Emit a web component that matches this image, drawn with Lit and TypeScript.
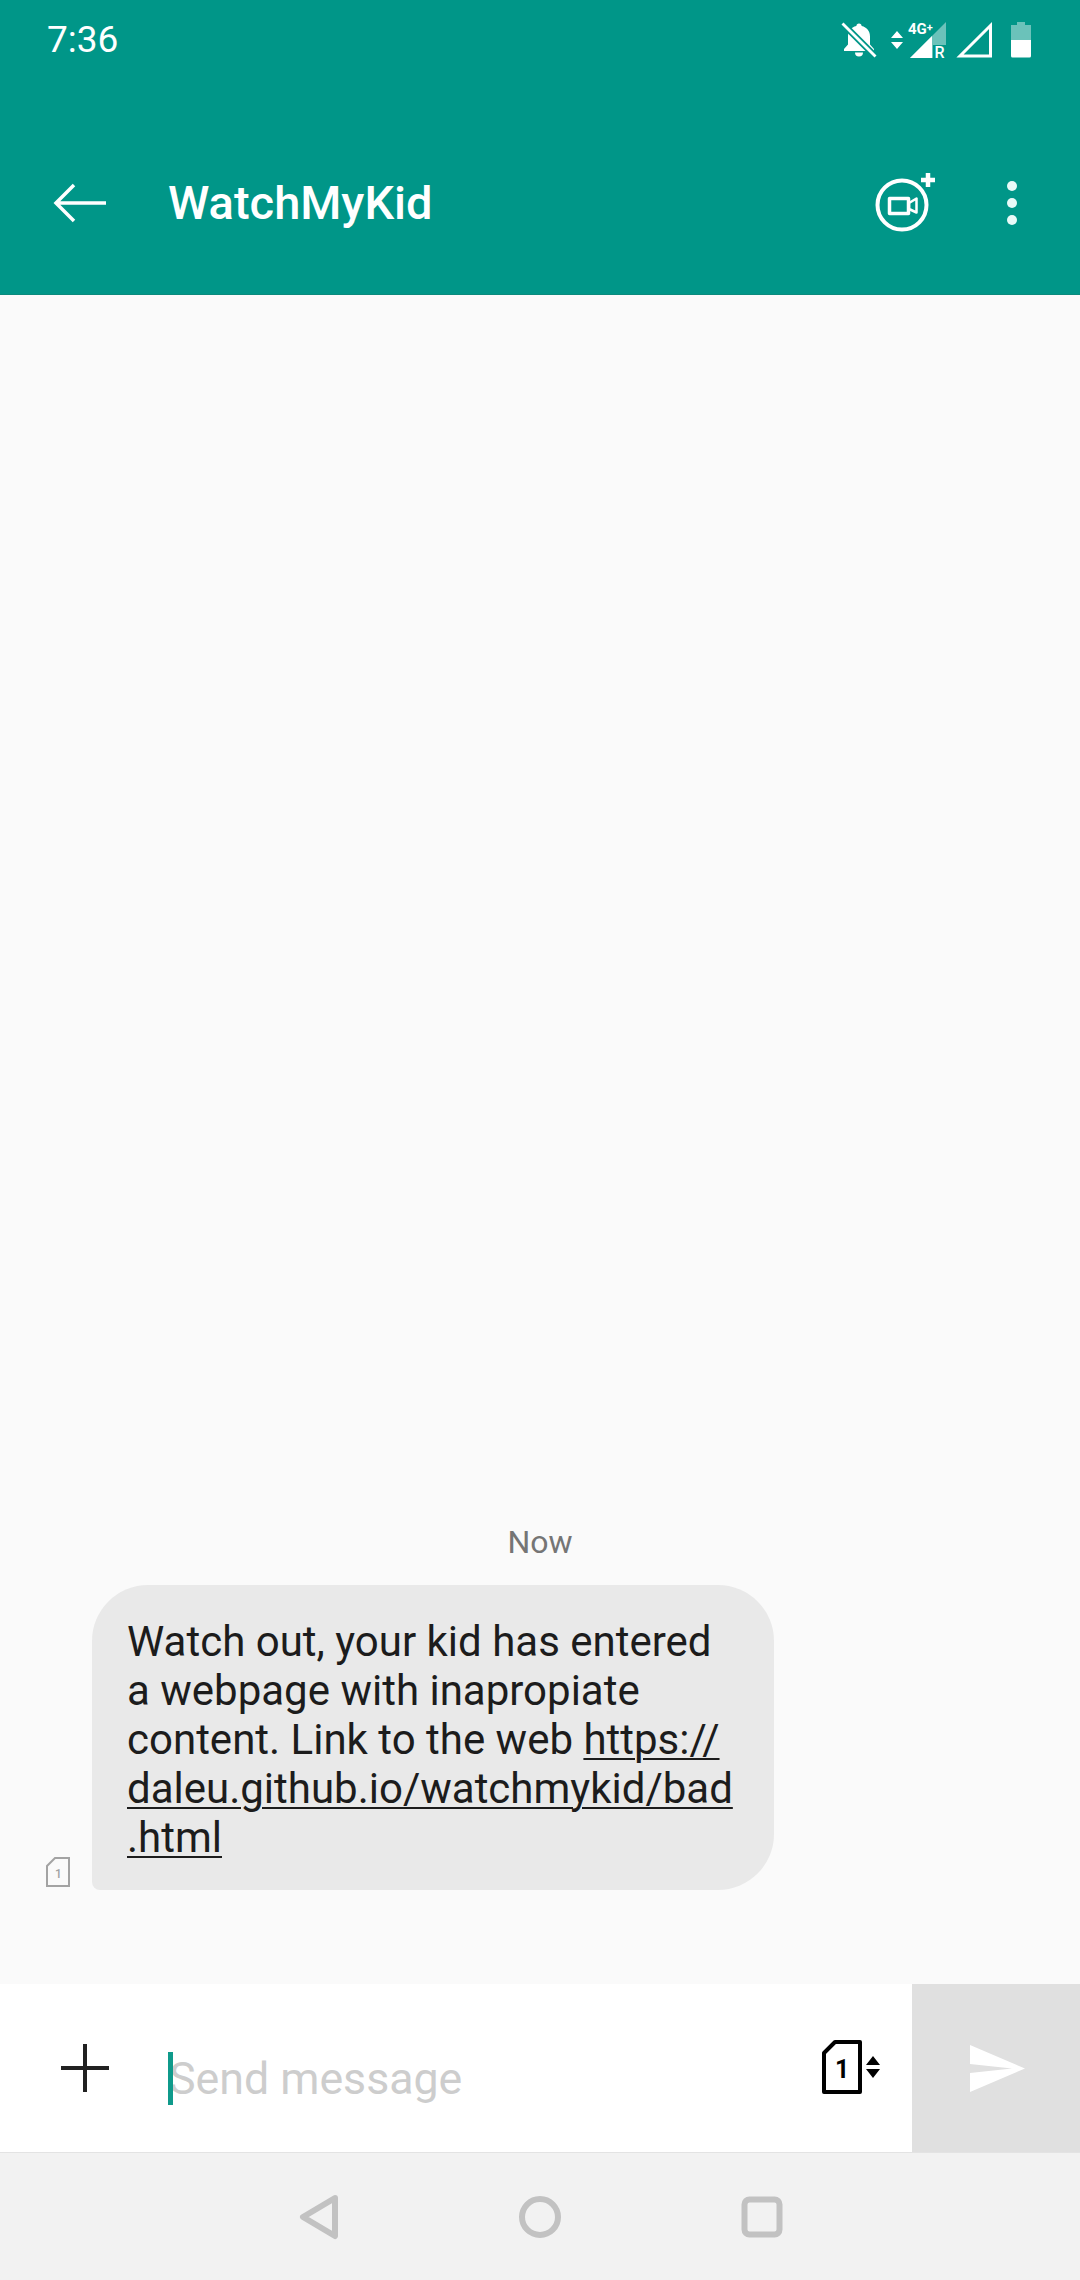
import { LitElement, html, css, svg } from "lit";
import { customElement } from "lit/decorators.js";

const bell = html`<svg class="i" width="36" height="36" viewBox="0 0 36 36">
  <path fill="#fff" d="M18 1.500c-1.600 0-2.600 1.100-2.600 2.600-5.500 1.200-8.400 5.400-8.400 10.400v8L3 27v2h30v-2l-4-4.500v-8C29 9.500 26 5.300 20.600 4.100 20.600 2.600 19.600 1.500 18 1.500zM14 30.500a4 4 0 0 0 8 0z"/>
  <path stroke="#009688" stroke-width="6.500" d="M2 2l32 32"/>
  <path stroke="#fff" stroke-width="2.800" d="M1.500 1.500l33 33"/>
</svg>`;

@customElement("app-root")
export class AppRoot extends LitElement {
  static styles = css`
    :host { display: flex; flex-direction: column; width: 1080px; height: 2280px; background: #fafafa; font-family: Roboto, "Liberation Sans", sans-serif; color: #1c1c1c; overflow: hidden; }
    svg { display: block; flex: none; overflow: visible; }
    .head { background: #009688; height: 295px; flex: none; color: #fff; border-bottom: 1px solid #0b8a7d; box-sizing: border-box; }
    .status { height: 80px; display: flex; align-items: center; padding: 0 49px 0 47px; }
    .time { font-size: 37px; line-height: 80px; flex: 1; }
    .icons { display: flex; align-items: flex-start; height: 80px; padding-top: 22px; box-sizing: border-box; }
    .bell { margin-right: 13px; }
    .updown { margin: 9px 4px 0 0; }
    .sig1 { margin-right: 9px; }
    .sig2 { margin-right: 18px; }
    .bar { display: flex; align-items: center; height: 214px; padding: 32px 0 0 52px; box-sizing: border-box; }
    .title { font-size: 47px; font-weight: 500; margin-left: 60px; flex: 1; line-height: 60px; }
    .video { margin: 0 68px 8px 0; }
    .more { margin-right: 63px; }
    .msgs { flex: 1; display: flex; flex-direction: column; justify-content: flex-end; padding-bottom: 94px; }
    .now { text-align: center; font-size: 32px; line-height: 36px; color: #757575; margin-bottom: 25px; }
    .row { display: flex; align-items: flex-end; padding-left: 45px; }
    .sim { margin: 0 21px 2px 0; }
    .bubble { width: 682px; box-sizing: border-box; padding: 32px 20px 28px 35px; background: #e9e9e9; border-radius: 56px 56px 56px 8px; font-size: 42px; line-height: 49px; color: #1c1c1c; white-space: nowrap; }
    .link { text-decoration: underline; text-decoration-thickness: 2px; text-underline-offset: 4px; }
    .input { flex: none; height: 169px; background: #fff; display: flex; align-items: stretch; border-bottom: 1px solid #e3e3e3; box-sizing: border-box; }
    .add { width: 168px; flex: none; display: flex; align-items: center; padding: 0 0 1px 61px; box-sizing: border-box; }
    .field { flex: 1; display: flex; align-items: center; position: relative; }
    .caret { position: absolute; left: 0; top: 68px; width: 5px; height: 53px; background: #0f9a8b; }
    .placeholder { font-size: 44.700px; color: #cdcdcd; padding-left: 1px; margin-top: 21px; line-height: 60px; }
    .pick { flex: none; display: flex; align-items: center; margin-right: 32px; padding-bottom: 2px; }
    .updown2 { margin-left: 3px; }
    .send { flex: none; width: 168px; background: #e0e0e0; display: flex; align-items: center; justify-content: center; padding: 0 0 0 3px; box-sizing: border-box; }
    .nav { flex: none; height: 127px; background: #f2f2f2; display: flex; align-items: center; padding-left: 298px; box-sizing: border-box; }
    .tri { margin-right: 179px; }
    .circ { margin-right: 180px; }
  `;

  render() {
    return html`
      <div class="head">
        <div class="status">
          <div class="time">7:36</div>
          <div class="icons">
            <div class="bell">${bell}</div>
            <svg class="updown" width="14" height="18" viewBox="0 0 14 18"><path fill="#fff" d="M7 0l6 7H1zM7 18l6-7H1z"/></svg>
            <svg class="sig1" width="40" height="38" viewBox="0 0 40 38">
              <path fill="#fff" fill-opacity=".42" d="M38 0v36H2z"/>
              <path fill="#fff" d="M2 36l22-22v22z"/>
              <rect x="25" y="23" width="15" height="15" fill="#009688"/>
              ${svg`<text x="0" y="12" font-size="15" font-weight="700" fill="#fff" font-family="Roboto, sans-serif">4G<tspan font-size="11" dy="-3">+</tspan></text>
              <text x="26.500" y="36" font-size="16" font-weight="500" fill="#fff" font-family="Roboto, sans-serif">R</text>`}
            </svg>
            <svg class="sig2" width="36" height="36" viewBox="0 0 36 36"><path fill="none" stroke="#fff" stroke-width="3" d="M33.500 3.500V34H3z"/></svg>
            <svg width="20" height="36" viewBox="0 0 20 36">
              <path fill="#fff" fill-opacity=".42" d="M6 0h8v3h6v15H0V3h6z"/>
              <path fill="#fff" d="M0 18h20v16a1.500 1.500 0 0 1-1.500 1.500h-17A1.500 1.500 0 0 1 0 34z"/>
            </svg>
          </div>
        </div>
        <div class="bar">
          <svg width="56" height="42" viewBox="0 0 56 42"><path fill="none" stroke="#fff" stroke-width="3.500" d="M54 21H5M22 3L4 21l18 18"/></svg>
          <div class="title">WatchMyKid</div>
          <svg class="video" width="64" height="66" viewBox="0 0 64 66" fill="none" stroke="#fff">
            <circle cx="27" cy="39" r="24.500" stroke-width="4"/>
            <rect x="14.500" y="32.500" width="19" height="15" stroke-width="3.500" stroke-linejoin="round"/>
            <path stroke-width="2.500" stroke-linejoin="round" d="M34 37l7.500-4.500v14L34 43z"/>
            <path stroke-width="4.500" d="M53 7v14M46 14h14"/>
          </svg>
          <svg class="more" width="10" height="44" viewBox="0 0 10 44"><g fill="#e8faf8"><circle cx="5" cy="5" r="5"/><circle cx="5" cy="22" r="5"/><circle cx="5" cy="39" r="5"/></g></svg>
        </div>
      </div>
      <div class="msgs">
        <div class="now">Now</div>
        <div class="row">
          <svg class="sim" width="26" height="32" viewBox="0 0 26 32">
            <path fill="none" stroke="#a3a3a3" stroke-width="2" d="M10 2h14v28H2V10z"/>
            ${svg`<text x="10" y="22" font-size="12" fill="#a3a3a3" font-family="Roboto, sans-serif" font-weight="500">1</text>`}
          </svg>
          <div class="bubble">Watch out, your kid has entered<br>a webpage with inapropiate<br>content. Link to the web <span class="link">https://</span><br><span class="link">daleu.github.io/watchmykid/bad</span><br><span class="link">.html</span></div>
        </div>
      </div>
      <div class="input">
        <div class="add"><svg width="48" height="48" viewBox="0 0 48 48"><path stroke="#212121" stroke-width="4" d="M24 0v48M0 24h48"/></svg></div>
        <div class="field"><div class="caret"></div><div class="placeholder">Send message</div></div>
        <div class="pick">
          <svg width="42" height="54" viewBox="0 0 42 54">
            <path fill="none" stroke="#000" stroke-width="4" stroke-linejoin="round" d="M14 2h25v50H3V13z"/>
            ${svg`<text x="14" y="38" font-size="25" font-weight="700" fill="#000" font-family="Roboto, sans-serif">1</text>`}
          </svg>
          <svg class="updown2" width="14" height="22" viewBox="0 0 14 22"><path d="M7 0l7 9H0zM7 22l7-9H0z"/></svg>
        </div>
        <div class="send"><svg width="55" height="47" viewBox="0 0 55 47"><path fill="#fff" d="M0 0l55 23.500L0 47V28l42-4.500L0 19z"/></svg></div>
      </div>
      <div class="nav">
        <svg class="tri" width="42" height="46" viewBox="0 0 42 46"><path fill="none" stroke="#c2c2c2" stroke-width="6" stroke-linejoin="round" d="M37 4L5 23l32 19z"/></svg>
        <svg class="circ" width="42" height="42" viewBox="0 0 42 42"><circle cx="21" cy="21" r="18" fill="none" stroke="#c2c2c2" stroke-width="6"/></svg>
        <svg width="42" height="42" viewBox="0 0 42 42"><rect x="3.500" y="3.500" width="35" height="35" rx="5" fill="none" stroke="#c2c2c2" stroke-width="6"/></svg>
      </div>
    `;
  }
}
